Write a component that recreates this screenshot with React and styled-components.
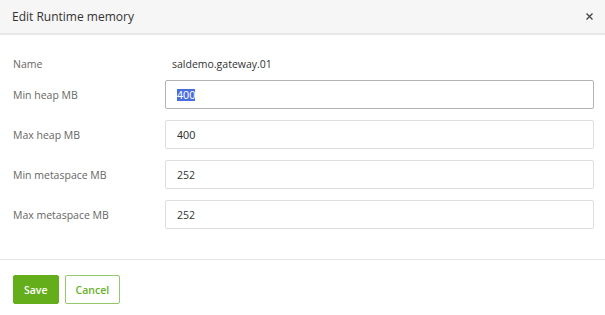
import React, { useEffect, useRef } from "react";
import styled, { createGlobalStyle } from "styled-components";

const Global = createGlobalStyle`
  html, body { margin: 0; padding: 0; background: #fff; }
  body { font-family: "Open Sans", "Noto Sans", sans-serif; }
  * { box-sizing: border-box; }
`;

const Dialog = styled.div`
  width: 605px;
  height: 315px;
  background: #fff;
  display: flex;
  flex-direction: column;
`;

const Header = styled.div`
  height: 35px;
  flex: none;
  background: #f6f6f6;
  border-bottom: 2px solid #e8e8e8;
  display: flex;
  align-items: center;
  justify-content: space-between;
  padding: 0 12px 0 12px;
`;

const Title = styled.h2`
  margin: 0;
  font-size: 12px;
  font-weight: 400;
  color: #333;
`;

const CloseButton = styled.button`
  border: 0;
  background: none;
  padding: 0;
  width: 7px;
  height: 7px;
  display: flex;
  cursor: pointer;
  color: #444;
`;

const Body = styled.div`
  padding: 19px 11px 30px 13px;
  display: flex;
  flex-direction: column;
  border-bottom: 1px solid #e2e2e2;
`;

const Row = styled.div`
  display: grid;
  grid-template-columns: 152px 1fr;
  align-items: center;
  height: ${(p) => (p.$static ? "20px" : "29px")};
  margin-top: ${(p) => (p.$first ? "0" : p.$afterStatic ? "6px" : "11px")};
`;

const Label = styled.label`
  font-size: 10.5px;
  color: #666;
`;

const Value = styled.span`
  font-size: 10.5px;
  color: #333;
  padding-left: 7px;
`;

const Input = styled.input`
  width: 100%;
  height: 29px;
  border: 1px solid ${(p) => (p.$focused ? "#b4b4b4" : "#dedede")};
  border-radius: 2px;
  padding: 0 11px;
  font-family: ${(p) =>
    p.$sys ? '"Liberation Sans", Arial, sans-serif' : '"Open Sans", "Noto Sans", sans-serif'};
  font-size: ${(p) => (p.$sys ? "11px" : "10.5px")};
  color: #333;
  outline: none;
  background: #fff;
  &::selection {
    background: #4a6ee0;
    color: #fff;
  }
`;

const Footer = styled.div`
  padding: 15px 13px 0;
  display: flex;
  gap: 6px;
`;

const Button = styled.button`
  height: 29px;
  padding: 0 10px;
  border-radius: 2px;
  font-family: "Open Sans", "Noto Sans", sans-serif;
  font-size: 10.5px;
  font-weight: 600;
  cursor: pointer;
  border: 1px solid ${(p) => (p.$primary ? "#64ae1b" : "#93c96a")};
  background: ${(p) => (p.$primary ? "#64ae1b" : "#fff")};
  color: ${(p) => (p.$primary ? "#fff" : "#68b12a")};
`;

const fields = [
  { label: "Min heap MB", value: "400", sys: true, focus: true },
  { label: "Max heap MB", value: "400", sys: true },
  { label: "Min metaspace MB", value: "252" },
  { label: "Max metaspace MB", value: "252" },
];

export default function App() {
  const ref = useRef(null);
  useEffect(() => {
    if (ref.current) {
      ref.current.focus();
      ref.current.select();
    }
  }, []);
  return (
    <Dialog>
      <Global />
      <Header>
        <Title>Edit Runtime memory</Title>
        <CloseButton aria-label="Close">
          <svg width="7" height="7" viewBox="0 0 7 7">
            <path d="M0.5 0.5L6.5 6.5M6.5 0.5L0.5 6.5" stroke="currentColor" strokeWidth="1.3" fill="none" />
          </svg>
        </CloseButton>
      </Header>
      <Body>
        <Row $static $first>
          <Label>Name</Label>
          <Value>saldemo.gateway.01</Value>
        </Row>
        {fields.map((f, i) => (
          <Row key={f.label} $afterStatic={i === 0}>
            <Label>{f.label}</Label>
            <Input
              ref={f.focus ? ref : undefined}
              defaultValue={f.value}
              $sys={f.sys}
              $focused={f.focus}
            />
          </Row>
        ))}
      </Body>
      <Footer>
        <Button $primary>Save</Button>
        <Button>Cancel</Button>
      </Footer>
    </Dialog>
  );
}
